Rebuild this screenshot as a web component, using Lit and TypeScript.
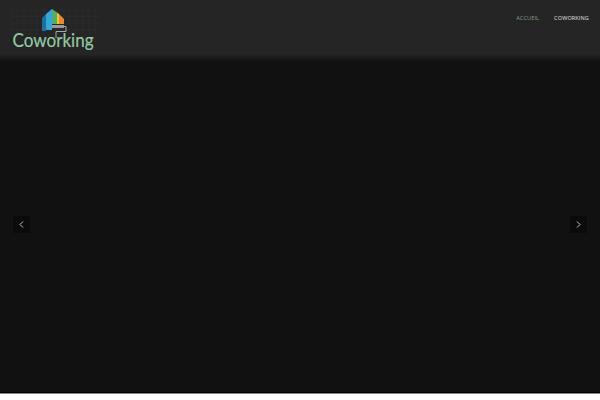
import { LitElement, html, css, svg } from "lit";
import { customElement } from "lit/decorators.js";

@customElement("app-root")
export class AppRoot extends LitElement {
  static styles = css`
    :host { display: block; width: 600px; height: 400px; background: #fff; font-family: "Open Sans", sans-serif; overflow: hidden; }
    .page { height: 392px; display: flex; flex-direction: column; background: #111; border-bottom: 1px solid #000; }
    .rule { height: 1px; background: #8a8a8a; }
    header { height: 62px; flex: none; display: flex; justify-content: space-between; align-items: flex-start; box-sizing: border-box; padding: 0 11px 0 9px;
      background: linear-gradient(to bottom, #252525 0, #252525 54px, #111 62px); }
    .logo { width: 100px; height: 60px; display: block; }
    .logo text { font-family: Lato, sans-serif; font-size: 19.5px; fill: #95c8a4; stroke: #95c8a4; stroke-width: 0.2px; }
    nav { display: flex; gap: 15px; padding-top: 14px; opacity: 0.99; }
    nav a { font-size: 5.5px; line-height: 8px; letter-spacing: 0.15px; color: #e4e4e4; }
    nav a.active { color: #86a38f; }
    .hero { flex: 1; position: relative; }
    .arrow { position: absolute; top: 154px; width: 17px; height: 17px; background: #0b0b0b; display: flex; align-items: center; justify-content: center; }
    .arrow.prev { left: 13px; }
    .arrow.next { right: 13px; }
    .arrow svg { width: 17px; height: 17px; fill: none; stroke: #c8c8c8; stroke-width: 1; }
  `;

  render() {
    const grid = [];
    for (let x = 2; x < 90; x += 6.5) grid.push(svg`<path d="M${x} 10V34" />`);
    for (let y = 10; y < 36; y += 6.5) grid.push(svg`<path d="M2 ${y}H90" />`);
    return html`
      <div class="page">
        <header>
          <svg class="logo" viewBox="0 0 100 60">
            <g stroke="#303030" stroke-width="0.5" fill="none">${grid}</g>
            <path d="M33 31V18L37 14V31Z" fill="#1d6f9e" />
            <path d="M37 30V14L43 9V30Z" fill="#38a5d8" />
            <path d="M43 9L48 12.5V24H43Z" fill="#4fae6a" />
            <path d="M48 12.5L50 14V24H48Z" fill="#e8c52c" />
            <path d="M50 14L55 19V24H50Z" fill="#e8892c" />
            <path d="M43 25H55V28H43Z" fill="#9a9a9a" />
            <path d="M55 26.5H57V31.5H47V38" fill="none" stroke="#a8a8a8" stroke-width="1" />
            <text x="3.5" y="47" textLength="81" lengthAdjust="spacingAndGlyphs">Coworking</text>
          </svg>
          <nav>
            <a class="active">ACCUEIL</a>
            <a>COWORKING</a>
          </nav>
        </header>
        <div class="hero">
          <div class="arrow prev"><svg viewBox="0 0 17 17"><path d="M10 5.5L7 8.5L10 11.5" /></svg></div>
          <div class="arrow next"><svg viewBox="0 0 17 17"><path d="M7 5.5L10 8.5L7 11.5" /></svg></div>
        </div>
      </div>
      <div class="rule"></div>
    `;
  }
}
